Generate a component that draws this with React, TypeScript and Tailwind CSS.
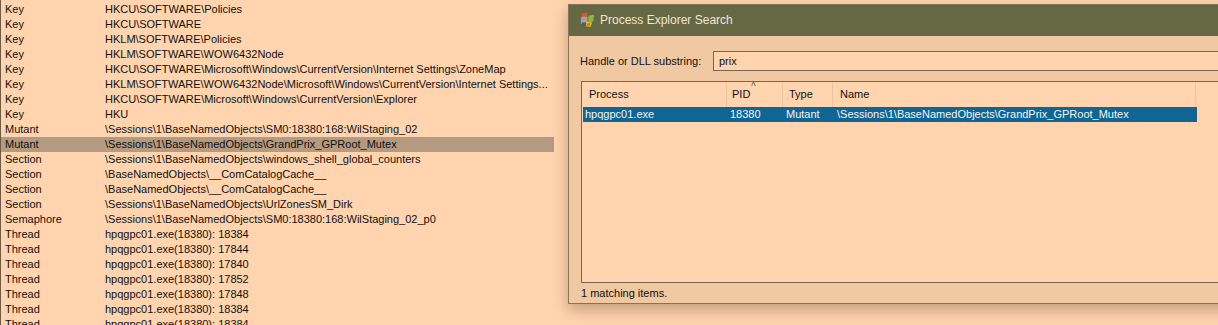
import React from "react";

const rows: [string, string][] = [
  ["Key", "HKLM\\SOFTWARE\\Microsoft"],
  ["Key", "HKCU\\SOFTWARE\\Policies"],
  ["Key", "HKCU\\SOFTWARE"],
  ["Key", "HKLM\\SOFTWARE\\Policies"],
  ["Key", "HKLM\\SOFTWARE\\WOW6432Node"],
  ["Key", "HKCU\\SOFTWARE\\Microsoft\\Windows\\CurrentVersion\\Internet Settings\\ZoneMap"],
  ["Key", "HKLM\\SOFTWARE\\WOW6432Node\\Microsoft\\Windows\\CurrentVersion\\Internet Settings..."],
  ["Key", "HKCU\\SOFTWARE\\Microsoft\\Windows\\CurrentVersion\\Explorer"],
  ["Key", "HKU"],
  ["Mutant", "\\Sessions\\1\\BaseNamedObjects\\SM0:18380:168:WilStaging_02"],
  ["Mutant", "\\Sessions\\1\\BaseNamedObjects\\GrandPrix_GPRoot_Mutex"],
  ["Section", "\\Sessions\\1\\BaseNamedObjects\\windows_shell_global_counters"],
  ["Section", "\\BaseNamedObjects\\__ComCatalogCache__"],
  ["Section", "\\BaseNamedObjects\\__ComCatalogCache__"],
  ["Section", "\\Sessions\\1\\BaseNamedObjects\\UrlZonesSM_Dirk"],
  ["Semaphore", "\\Sessions\\1\\BaseNamedObjects\\SM0:18380:168:WilStaging_02_p0"],
  ["Thread", "hpqgpc01.exe(18380): 18384"],
  ["Thread", "hpqgpc01.exe(18380): 17844"],
  ["Thread", "hpqgpc01.exe(18380): 17840"],
  ["Thread", "hpqgpc01.exe(18380): 17852"],
  ["Thread", "hpqgpc01.exe(18380): 17848"],
  ["Thread", "hpqgpc01.exe(18380): 18384"],
  ["Thread", "hpqgpc01.exe(18380): 18384"],
];

function AppIcon() {
  return (
    <svg width="17" height="17" viewBox="0 0 18 18">
      <rect x="3" y="1" width="6" height="5" rx="1" fill="#d9552b" />
      <rect x="2" y="5" width="7" height="8" rx="1" fill="#9aa3b4" />
      <rect x="3" y="11" width="5" height="4" fill="#4c5a7a" />
      <path d="M10 4 L16 3 L15 10 L10 11 Z" fill="#8fb53a" />
      <path d="M8 10 L14 11 L12 16 L7 15 Z" fill="#e9b52a" />
      <path d="M9 12 L12 12 L11 15 L8 14 Z" fill="#c9741f" />
    </svg>
  );
}

export default function App() {
  return (
    <div className="relative h-[325px] w-[1218px] overflow-hidden bg-[#ffd4ae] text-[11px] leading-[15px] text-[#111] font-['Liberation_Sans',Arial,sans-serif]">
      {/* handle list underneath */}
      <div className="absolute inset-y-0 left-0 w-px bg-[#6b5a48]" />
      <div className="flex flex-col -mt-[13px]">
        {rows.map(([type, name], i) => (
          <div
            key={i}
            className={`flex h-[15px] w-[554px] items-center whitespace-nowrap ${i === 10 ? "bg-[#b49a80]" : ""}`}
          >
            <span className="w-[105px] shrink-0 pl-[5px]">{type}</span>
            <span>{name}</span>
          </div>
        ))}
      </div>

      {/* search dialog */}
      <div className="absolute left-[568px] top-[4px] flex h-[300px] w-[700px] flex-col border border-[#8a7258] bg-[#f0c8a2] shadow-[0_6px_14px_rgba(90,60,30,0.35)]">
        <div className="flex h-[31px] shrink-0 items-center gap-[4px] bg-[#656843] pl-[10px] text-[12px] text-[#f3e6d2]">
          <AppIcon />
          <span>Process Explorer Search</span>
        </div>
        <div className="flex items-center pl-[11px] pt-[15px]">
          <span className="w-[133px]">Handle or DLL substring:</span>
          <div className="flex h-[20px] flex-1 items-center border border-[#7a6550] bg-[#ffd4ae] pl-[5px]">prix</div>
        </div>
        <div className="ml-[12px] mt-[10px] flex h-[202px] flex-col border border-[#7a6550] bg-[#ffd4ae]">
          <div className="relative flex h-[25px] items-center">
            <div className="flex h-full w-[145px] items-center border-r border-[#ecc39c] pl-[7px]">Process</div>
            <div className="relative flex h-full w-[56px] items-center border-r border-[#ecc39c] pl-[5px]">
              PID
              <span className="absolute left-[24px] top-[-3px] text-[10px] text-[#555]">^</span>
            </div>
            <div className="flex h-full w-[50px] items-center border-r border-[#ecc39c] pl-[6px]">Type</div>
            <div className="flex h-full w-[363px] items-center border-r border-[#ecc39c] pl-[7px]">Name</div>
          </div>
          <div className="ml-[1px] flex h-[15px] w-[614px] items-center whitespace-nowrap bg-[#0f6593] text-[#f4f4f4]">
            <span className="w-[145px] pl-[2px]">hpqgpc01.exe</span>
            <span className="w-[56px] pl-[2px]">18380</span>
            <span className="w-[50px] pl-[2px]">Mutant</span>
            <span className="pl-[3px]">\Sessions\1\BaseNamedObjects\GrandPrix_GPRoot_Mutex</span>
          </div>
        </div>
        <div className="flex flex-1 items-center pl-[12px]">1 matching items.</div>
      </div>
    </div>
  );
}
